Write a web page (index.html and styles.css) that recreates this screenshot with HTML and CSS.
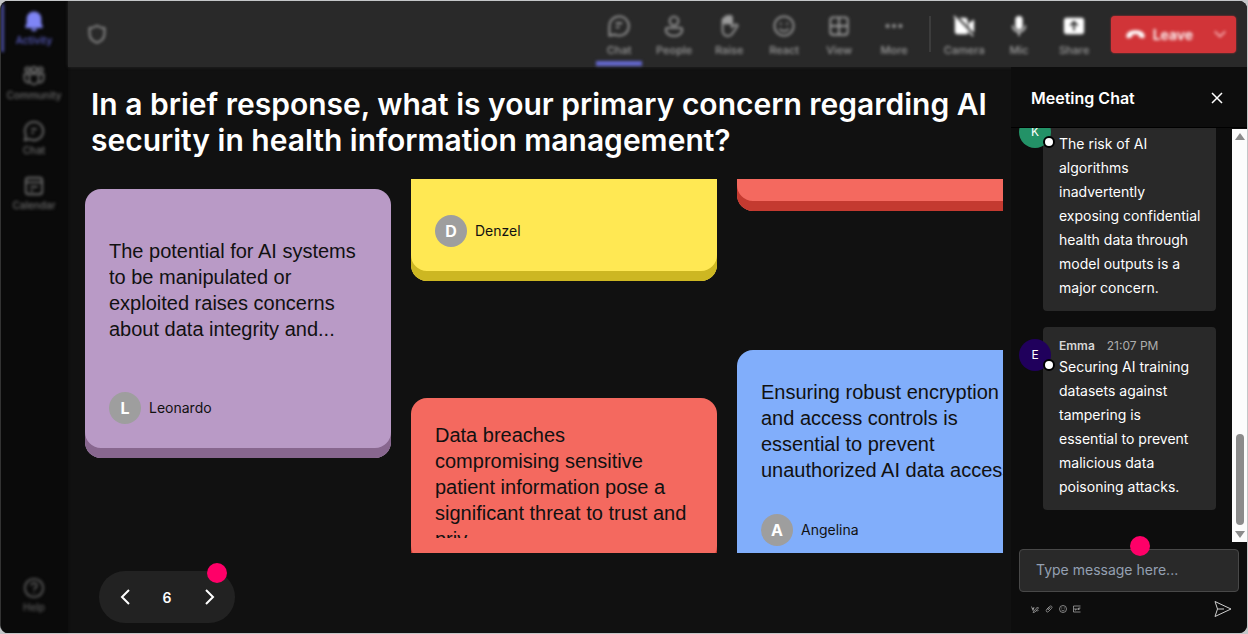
FILE: index.html
```html
<!DOCTYPE html>
<html lang="en">
<head>
<meta charset="utf-8">
<title>Meeting Chat</title>
<link rel="stylesheet" href="styles.css">
</head>
<body>
<div class="app">
  <nav class="rail" aria-label="Main">
    <button class="rail-item rail-item--active" type="button">
      <svg class="icon" viewBox="0 0 24 24"><path fill="currentColor" d="M12 1.500a8 8 0 0 0-8 8v5L2.500 18a1 1 0 0 0 1 1.500h17a1 1 0 0 0 1-1.500L20 14.500v-5a8 8 0 0 0-8-8zM8.500 20.500a3.600 3.600 0 0 0 7 0z"/></svg>
      <span>Activity</span>
    </button>
    <button class="rail-item" type="button">
      <svg class="icon line" viewBox="0 0 24 24"><circle cx="5" cy="5" r="2.500"/><circle cx="12" cy="5" r="3"/><circle cx="19" cy="5" r="2.500"/><path d="M7 10h10v6a5 5 0 0 1-10 0zM7 10H1.500v5A4.500 4.500 0 0 0 7 19M17 10h5.500v5A4.500 4.500 0 0 1 17 19"/></svg>
      <span>Community</span>
    </button>
    <button class="rail-item" type="button">
      <svg class="icon line" viewBox="0 0 24 24"><path d="M12 2a10 10 0 1 1-4.700 18.800L2 22l1.200-5.300A10 10 0 0 1 12 2zM9 10h6M9 14h3"/></svg>
      <span>Chat</span>
    </button>
    <button class="rail-item" type="button">
      <svg class="icon line" viewBox="0 0 24 24"><rect x="3" y="3" width="18" height="18" rx="3"/><path d="M3 8h18M8 13h8M8 17h3"/></svg>
      <span>Calendar</span>
    </button>
    <button class="rail-item rail-item--last" type="button">
      <svg class="icon line" viewBox="0 0 24 24"><circle cx="12" cy="12" r="10"/><path d="M9 9.500a3 3 0 1 1 4.500 2.600c-1 .6-1.500 1-1.500 2M12 16.500v1.500"/></svg>
      <span>Help</span>
    </button>
  </nav>

  <header class="toolbar">
    <svg class="shield line" viewBox="0 0 24 24"><path d="M12 2c3 2 5.500 3 9 3v7c0 5-4 8.500-9 10.500C7 20.500 3 17 3 12V5c3.500 0 6-1 9-3z"/></svg>
    <div class="tools">
      <button class="tool tool--active" type="button">
        <svg class="icon line" viewBox="0 0 24 24"><path d="M12 1.500a10.500 10.500 0 1 1-4.700 19.800L1.500 22.500V12A10.500 10.500 0 0 1 12 1.500zM8.500 9h7M8.500 13.500h4"/></svg>
        <span>Chat</span>
      </button>
      <button class="tool" type="button">
        <svg class="icon line" viewBox="0 0 24 24"><circle cx="12" cy="6.500" r="4.800"/><path d="M5 14h14a2 2 0 0 1 2 2c0 4-4 6.800-9 6.800S3 20 3 16a2 2 0 0 1 2-2z"/></svg>
        <span>People</span>
      </button>
      <button class="tool" type="button">
        <svg class="icon line" viewBox="0 0 24 24"><path d="M5 3.500l3-2 4-1 4 2V10H5z" fill="currentColor" stroke="none"/><path d="M5 13V5.500a1.500 1.500 0 0 1 3 0V3a1.500 1.500 0 0 1 3.500 0v-.5a1.500 1.500 0 0 1 3.500 0V13l4-2.500c1.500-.8 3 .8 2 2l-5.500 8c-1 1.500-2.500 2.500-4.500 2.500-3.500 0-6-2.500-6-6z"/></svg>
        <span>Raise</span>
      </button>
      <button class="tool" type="button">
        <svg class="icon line" viewBox="0 0 24 24"><circle cx="12" cy="12" r="10.500"/><path d="M7 15c2.500 3.500 7.500 3.500 10 0M8.500 8.500v2M15.500 8.500v2"/></svg>
        <span>React</span>
      </button>
      <button class="tool" type="button">
        <svg class="icon line" viewBox="0 0 24 24"><rect x="2.500" y="2.500" width="19" height="19" rx="3"/><path d="M12 2.500v19M2.500 12h19"/></svg>
        <span>View</span>
      </button>
      <button class="tool" type="button">
        <svg class="icon" viewBox="0 0 24 24" fill="currentColor"><circle cx="5" cy="12" r="2.200"/><circle cx="12" cy="12" r="2.200"/><circle cx="19" cy="12" r="2.200"/></svg>
        <span>More</span>
      </button>
    </div>
    <div class="tools tools--devices">
      <button class="tool" type="button">
        <svg class="icon" viewBox="0 0 24 24"><path fill="currentColor" d="M4 3h9a3 3 0 0 1 3 3v15H5a3 3 0 0 1-3-3V3zM17 9l6-4v14l-6-4z"/><path d="M3 1l20 21" stroke="#292929" stroke-width="3"/><path d="M1 1l21 22" stroke="currentColor" stroke-width="1.500"/></svg>
        <span>Camera</span>
      </button>
      <button class="tool" type="button">
        <svg class="icon" viewBox="0 0 24 24"><rect x="8" y="1" width="8" height="15" rx="4" fill="currentColor"/><path d="M5 11.500a7 7 0 0 0 14 0M12 18.500V23" fill="none" stroke="currentColor" stroke-width="1.500"/></svg>
        <span>Mic</span>
      </button>
      <button class="tool" type="button">
        <svg class="icon" viewBox="0 0 24 24"><rect x="1" y="3" width="22" height="18" rx="3" fill="currentColor"/><path d="M12 17V8M8 11.500L12 7.500l4 4" fill="none" stroke="#292929" stroke-width="2"/></svg>
        <span>Share</span>
      </button>
    </div>
    <div class="leave">
      <button class="leave-main" type="button">
        <svg class="phone" viewBox="0 0 24 24"><path fill="currentColor" d="M12 7c5 0 10.500 2 10.500 6.500 0 2-.8 3-2 2.700l-3.500-.8c-1.200-.3-1.300-1.500-1.500-3.200-2-.8-5-.8-7 0-.2 1.700-.3 2.900-1.500 3.200l-3.500.8c-1.200.3-2-.7-2-2.700C1.500 9 7 7 12 7z"/></svg>
        <span>Leave</span>
      </button>
      <button class="leave-more" type="button" aria-label="Leave options">
        <svg class="caret line" viewBox="0 0 16 16"><path d="M2 5l6 6 6-6"/></svg>
      </button>
    </div>
  </header>

  <main class="stage">
    <h1 class="question">In a brief response, what is your primary concern regarding AI security in health information management?</h1>
    <div class="board">
      <div class="column column--first">
        <article class="card card--purple">
          <p class="card-text">The potential for AI systems to be manipulated or exploited raises concerns about data integrity and...</p>
          <div class="author"><span class="badge">L</span><span>Leonardo</span></div>
        </article>
      </div>
      <div class="column column--second">
        <article class="card card--yellow card--cut">
          <div class="author"><span class="badge">D</span><span>Denzel</span></div>
        </article>
        <article class="card card--red">
          <p class="card-text">Data breaches compromising sensitive patient information pose a significant threat to trust and priv...</p>
        </article>
      </div>
      <div class="column column--third">
        <article class="card card--red card--cut card--sliver"></article>
        <article class="card card--blue">
          <p class="card-text">Ensuring robust encryption and access controls is essential to prevent unauthorized AI data access</p>
          <div class="author"><span class="badge">A</span><span>Angelina</span></div>
        </article>
      </div>
    </div>
    <div class="pager">
      <button class="pager-button" type="button" aria-label="Previous"><svg class="chevron" viewBox="0 0 16 16"><path d="M12 1L5 8l7 7"/></svg></button>
      <span class="pager-value">6</span>
      <button class="pager-button" type="button" aria-label="Next"><svg class="chevron" viewBox="0 0 16 16"><path d="M5 1l7 7-7 7"/></svg></button>
      <span class="hotspot hotspot--pager"></span>
    </div>
  </main>

  <aside class="chat">
    <div class="chat-head">
      <h2 class="chat-title">Meeting Chat</h2>
      <button class="close" type="button" aria-label="Close"><svg class="cross" viewBox="0 0 12 12"><path d="M1 1l10 10M11 1L1 11"/></svg></button>
    </div>
    <div class="chat-body">
      <div class="messages">
        <article class="message">
          <div class="avatar avatar--green">K<span class="presence"></span></div>
          <div class="bubble bubble--plain">
            <p class="bubble-text">The risk of AI algorithms inadvertently exposing confidential health data through model outputs is a major concern.</p>
          </div>
        </article>
        <article class="message">
          <div class="avatar avatar--indigo">E<span class="presence"></span></div>
          <div class="bubble">
            <div class="meta"><strong>Emma</strong><time>21:07 PM</time></div>
            <p class="bubble-text">Securing AI training datasets against tampering is essential to prevent malicious data poisoning attacks.</p>
          </div>
        </article>
      </div>
      <div class="scrollbar">
        <svg class="arrow" viewBox="0 0 10 8"><path d="M5 0l5 7H0z"/></svg>
        <span class="thumb"></span>
        <svg class="arrow" viewBox="0 0 10 8"><path d="M5 8L0 1h10z"/></svg>
      </div>
    </div>
    <form class="composer">
      <div class="field">
        <input class="field-input" type="text" placeholder="Type message here..." aria-label="Message">
        <span class="hotspot hotspot--field"></span>
      </div>
      <div class="actions">
        <button class="action" type="button" aria-label="Format"><svg class="mini" viewBox="0 0 16 16"><path d="M1 3l3 8 2-7M2 7h4M5 13l8-9 2 2-7 8-4 1zM10 12c2-2 3 1 5-1"/></svg></button>
        <button class="action" type="button" aria-label="Attach"><svg class="mini" viewBox="0 0 16 16"><path d="M3 9l6-6c3-3 7 1 4 4l-6 6c-3 3-6-1-4-3l6-6M6 10l5-5"/></svg></button>
        <button class="action" type="button" aria-label="Emoji"><svg class="mini" viewBox="0 0 16 16"><circle cx="8" cy="8" r="7"/><path d="M5 10c2 2 4 2 6 0M5.500 5v2M10.500 5v2"/></svg></button>
        <button class="action" type="button" aria-label="GIF"><svg class="mini" viewBox="0 0 16 16"><path d="M15 2H1v12h14M4 6v4h2V8M8 6v4M11 10V6h4M11 8h3"/></svg></button>
        <button class="send" type="submit" aria-label="Send"><svg class="plane" viewBox="0 0 18 18"><path d="M1 1.500L17 9 1 16.500 3.500 9zM3.500 9H10"/></svg></button>
      </div>
    </form>
  </aside>
</div>
</body>
</html>
```
FILE: styles.css
```css
* { box-sizing: border-box; }

:root { --soft: blur(1px) blur(1px); }

body {
  margin: 0;
  background: #c4c6c8;
  font-family: Inter, "Liberation Sans", sans-serif;
  color: #fff;
}

h1, h2, p { margin: 0; }

button {
  border: 0;
  padding: 0;
  background: none;
  color: inherit;
  font: inherit;
}

svg { display: block; }

.line { fill: none; stroke: currentColor; stroke-width: 2; }

.app {
  display: grid;
  grid-template-columns: 67px minmax(0, 1fr) 236px;
  grid-template-rows: 66px minmax(0, 1fr);
  height: calc(100vh - 2px);
  margin: 1px 1px 1px 0;
  border-left: 1px solid #333;
  border-radius: 8px;
  overflow: hidden;
  background: #111;
}

/* Left rail */
.rail {
  grid-row: 1 / 3;
  display: flex;
  flex-direction: column;
  gap: 1px;
  padding: 3px 0 14px;
  background: #0a0a0a;
  box-shadow: 0 0 2px #0a0a0a;
}

.rail-item {
  display: flex;
  flex-direction: column;
  align-items: center;
  height: 54px;
  padding-top: 6px;
  gap: 1px;
  border-left: 3px solid transparent;
  padding-right: 4px;
  color: #6c6c6c;
  font-size: 10px;
  font-weight: 500;
  line-height: 14px;
  filter: var(--soft);
}

.rail-item--active { height: 48px; margin-bottom: 6px; border-color: #4b4ea0; color: #5a5ec4; }
.rail-item--active .icon { color: #7f85f5; }
.rail-item--last { margin-top: auto; height: 48px; color: #5c5c5c; }

.icon { width: 22px; height: 22px; }

/* Top toolbar */
.toolbar {
  grid-column: 2 / 4;
  display: flex;
  align-items: center;
  padding: 0 11px 0 19px;
  background: #292929;
  box-shadow: 0 0 3px #292929;
}

.shield { width: 20px; height: 20px; color: #9a9a9a; filter: var(--soft); }

.tools { display: flex; align-self: stretch; margin-left: auto; }

.tools--devices {
  margin: 0 9px 0 0;
  padding-left: 15px;
  background: linear-gradient(#3c3c3c, #3c3c3c) 7px 50% / 2px 36px no-repeat;
}

.tool {
  display: flex;
  flex-direction: column;
  align-items: center;
  width: 55px;
  padding-top: 14px;
  gap: 6px;
  color: #9c9c9c;
  font-size: 11px;
  font-weight: 500;
  line-height: 14px;
  filter: var(--soft);
}

.tool--active { background: linear-gradient(#6468cf, #6468cf) 50% 60px / 46px 5px no-repeat; }
.tools--devices .icon { color: #fff; }

.leave {
  display: flex;
  height: 37px;
  border-radius: 4px;
  background: #d13438;
  box-shadow: 0 0 2px #d13438;
}

.leave-main {
  display: flex;
  align-items: center;
  gap: 7px;
  padding-left: 14px;
  font-size: 14px;
  font-weight: 600;
  filter: var(--soft);
}

.leave-more { padding: 0 9px 0 20px; filter: var(--soft); }
.phone { width: 21px; height: 21px; }
.caret { width: 14px; height: 14px; color: #f8b8ba; }

/* Question board */
.stage {
  display: flex;
  flex-direction: column;
  align-items: flex-start;
  padding: 19px 8px 10px 17px;
  min-width: 0;
}

.question {
  padding: 0 6px;
  font-size: 30px;
  font-weight: 600;
  line-height: 36px;
}

.board {
  flex: 1;
  align-self: stretch;
  display: flex;
  gap: 20px;
  min-height: 0;
  margin: 21px 0 18px;
  overflow: hidden;
}

.column { flex: 0 0 306px; display: flex; flex-direction: column; }
.column--first { padding-top: 10px; }
.column--second { gap: 117px; }
.column--third { gap: 139px; }

.card {
  flex-shrink: 0;
  display: flex;
  flex-direction: column;
  padding: 24px 24px 34px;
  border-radius: 16px;
  color: #111;
}

.card--purple { gap: 50px; padding: 49px 24px 34px; background: #b99ac6; box-shadow: inset 0 -10px #88678f; }
.card--yellow { background: #ffe853; box-shadow: inset 0 -10px #cdb722; }
.card--red { background: #f4695f; box-shadow: inset 0 -10px #c43a30; }
.card--blue { padding-top: 29px; gap: 31px; background: #81aefb; }
.card--cut { padding-top: 36px; border-radius: 0 0 16px 16px; }
.card--sliver { height: 32px; padding: 0; }

.card-text {
  max-height: 116px;
  overflow: hidden;
  font-family: "Liberation Sans", Arial, sans-serif;
  font-size: 20px;
  line-height: 26px;
}

.card--blue .card-text { margin-right: -8px; }

.author { display: flex; align-items: center; gap: 8px; font-size: 14px; line-height: 20px; }

.badge {
  width: 32px;
  border-radius: 50%;
  background: #9e9e9e;
  color: #fff;
  font-size: 16px;
  font-weight: 700;
  line-height: 32px;
  text-align: center;
}

.pager {
  position: relative;
  display: flex;
  align-items: center;
  justify-content: space-between;
  width: 136px;
  height: 52px;
  margin-left: 14px;
  padding: 0 16px;
  border-radius: 26px;
  background: #222;
}

.pager-button { padding: 8px 2px; }
.pager-value { font-size: 14px; font-weight: 600; }
.chevron { width: 16px; height: 16px; fill: none; stroke: #fff; stroke-width: 2; }

.hotspot { position: absolute; width: 20px; height: 20px; border-radius: 50%; background: #ff0068; }
.hotspot--pager { top: -8px; right: 8px; }
.hotspot--field { top: -13px; left: 111px; }

/* Chat panel */
.chat { display: flex; flex-direction: column; min-height: 0; background: #0d0d0d; }

.chat-head {
  display: flex;
  align-items: center;
  justify-content: space-between;
  height: 61px;
  padding: 2px 24px 0 20px;
  border-bottom: 1px solid #000;
}

.chat-title { font-size: 16px; font-weight: 600; line-height: 24px; }
.cross { width: 12px; height: 12px; fill: none; stroke: #fff; stroke-width: 1.5; }

.chat-body { flex: 1; display: flex; min-height: 0; }

.messages {
  flex: 1;
  display: flex;
  flex-direction: column;
  justify-content: flex-end;
  gap: 16px;
  padding: 0 16px 32px 8px;
  overflow: hidden;
}

.message { display: flex; align-items: flex-start; }

.avatar {
  position: relative;
  flex: none;
  width: 32px;
  height: 32px;
  margin: 12px -8px 0 0;
  border-radius: 50%;
  font-size: 12px;
  line-height: 32px;
  text-align: center;
}

.avatar--green { background: #239267; }
.avatar--indigo { background: #20005c; }

.presence {
  position: absolute;
  right: -4px;
  bottom: 0;
  width: 12px;
  height: 12px;
  border: 2px solid #000;
  border-radius: 50%;
  background: #fff;
}

.bubble { flex: 1; padding: 9px 14px 11px 16px; border-radius: 4px; background: #292929; }
.bubble--plain { padding-top: 28px; }
.meta { display: flex; gap: 12px; color: #adadad; font-size: 12px; line-height: 19px; }
.meta strong { color: #d6d6d6; font-weight: 600; }
.bubble-text { font-size: 14px; line-height: 24px; }

.scrollbar {
  display: flex;
  flex-direction: column;
  align-items: center;
  width: 15px;
  margin-top: 1px;
  padding: 4px 0;
  background: #fcfcfc;
}

.arrow { width: 10px; height: 8px; fill: #8b8b8b; }
.thumb { width: 8px; height: 91px; margin: auto 0 5px; border-radius: 4px; background: #8b8b8b; }

.composer { padding: 7px 8px 15px; }
.field { position: relative; }

.field-input {
  display: block;
  width: 100%;
  height: 43px;
  padding: 0 16px 2px;
  border: 1px solid #484848;
  border-radius: 4px;
  background: #292929;
  color: #fff;
  font: 14px/20px Inter, sans-serif;
}

.field-input::placeholder { color: #94a0b2; opacity: 1; }

.actions { display: flex; align-items: center; gap: 6px; padding: 8px 7px 0 12px; }
.mini { width: 8px; height: 8px; fill: none; stroke: #aaa; stroke-width: 1.5; }
.send { margin-left: auto; }
.plane { width: 18px; height: 18px; fill: none; stroke: #d0d0d0; stroke-width: 1; }
```
